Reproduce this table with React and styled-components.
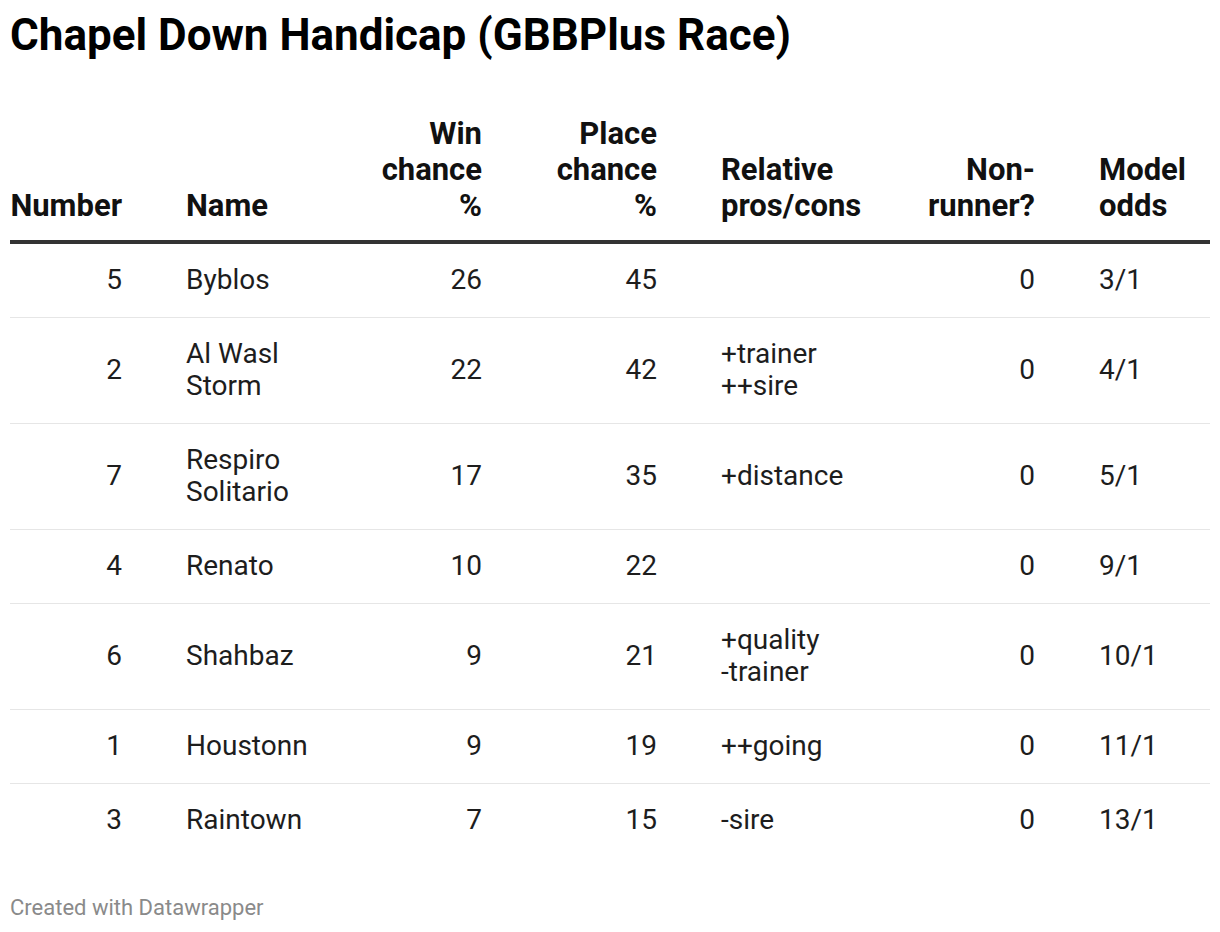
import React from "react";
import styled, { createGlobalStyle } from "styled-components";

const GlobalStyle = createGlobalStyle`
  html, body {
    margin: 0;
    padding: 0;
    background: #fff;
  }
  body {
    font-family: Roboto, "Liberation Sans", sans-serif;
    color: #181818;
  }
`;

const COLS = "144px 185px 175px 175px 205px 173px 143px";

const Page = styled.div`
  width: 1200px;
  padding: 9px 10px 0;
  display: flex;
  flex-direction: column;
`;

const Title = styled.h1`
  margin: 0;
  font-size: 44px;
  line-height: 52px;
  font-weight: 700;
  color: #000;
`;

const Table = styled.div`
  margin-top: 55px;
  display: flex;
  flex-direction: column;
`;

const Row = styled.div`
  display: grid;
  grid-template-columns: ${COLS};
  align-items: ${(p) => (p.$head ? "end" : "center")};
  border-bottom: ${(p) =>
    p.$head ? "4px solid #333" : p.$last ? "none" : "1px solid #e6e6e6"};
`;

const Cell = styled.div`
  padding: ${(p) => (p.$head ? "0 32px 16px" : "20px 32px 21px")};
  text-align: ${(p) => (p.$right ? "right" : "left")};
  font-size: ${(p) => (p.$head ? "31px" : "28px")};
  line-height: ${(p) => (p.$head ? "36px" : "32px")};
  font-weight: ${(p) => (p.$head ? 700 : 400)};
  color: ${(p) => (p.$head ? "#111" : "#1d1d1d")};
  white-space: pre;
  &:first-child {
    padding-left: 0;
  }
  &:last-child {
    padding-right: 0;
  }
`;

const Footer = styled.div`
  margin-top: 39px;
  font-size: 22px;
  line-height: 24px;
  color: #8a8a8a;
`;

const columns = [
  { label: "Number", right: true },
  { label: "Name" },
  { label: "Win\nchance\n%", right: true },
  { label: "Place\nchance\n%", right: true },
  { label: "Relative\npros/cons" },
  { label: "Non-\nrunner?", right: true },
  { label: "Model\nodds" },
];

const rows = [
  ["5", "Byblos", "26", "45", "", "0", "3/1"],
  ["2", "Al Wasl\nStorm", "22", "42", "+trainer\n++sire", "0", "4/1"],
  ["7", "Respiro\nSolitario", "17", "35", "+distance", "0", "5/1"],
  ["4", "Renato", "10", "22", "", "0", "9/1"],
  ["6", "Shahbaz", "9", "21", "+quality\n-trainer", "0", "10/1"],
  ["1", "Houstonn", "9", "19", "++going", "0", "11/1"],
  ["3", "Raintown", "7", "15", "-sire", "0", "13/1"],
];

export default function App() {
  return (
    <>
      <GlobalStyle />
      <Page>
        <Title>Chapel Down Handicap (GBBPlus Race)</Title>
        <Table>
          <Row $head>
            {columns.map((c) => (
              <Cell key={c.label} $head $right={c.right}>
                {c.label}
              </Cell>
            ))}
          </Row>
          {rows.map((r, i) => (
            <Row key={i} $last={i === rows.length - 1}>
              {r.map((v, j) => (
                <Cell key={j} $right={columns[j].right}>
                  {v}
                </Cell>
              ))}
            </Row>
          ))}
        </Table>
        <Footer>Created with Datawrapper</Footer>
      </Page>
    </>
  );
}
